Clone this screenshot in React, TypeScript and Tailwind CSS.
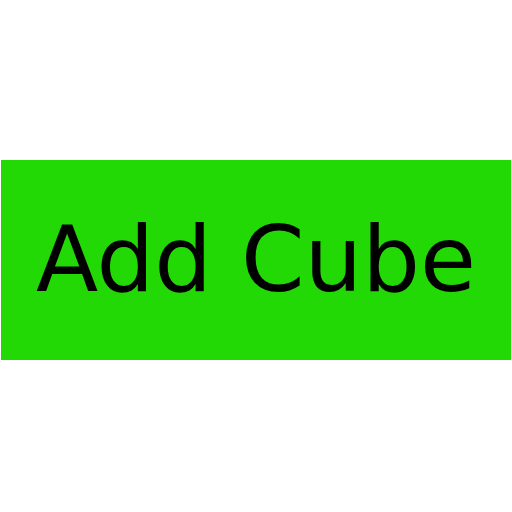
import React from 'react';

const App: React.FC = () => {
  return (
    <div className="w-[512px] h-[512px] bg-white pt-[160px] px-[1px]">
      <button
        type="button"
        className="w-full h-[200px] bg-[#22d906] text-black text-[91px] flex items-center justify-center"
        style={{ fontFamily: '"DejaVu Sans", sans-serif' }}
      >
        Add Cube
      </button>
    </div>
  );
};

export default App;
